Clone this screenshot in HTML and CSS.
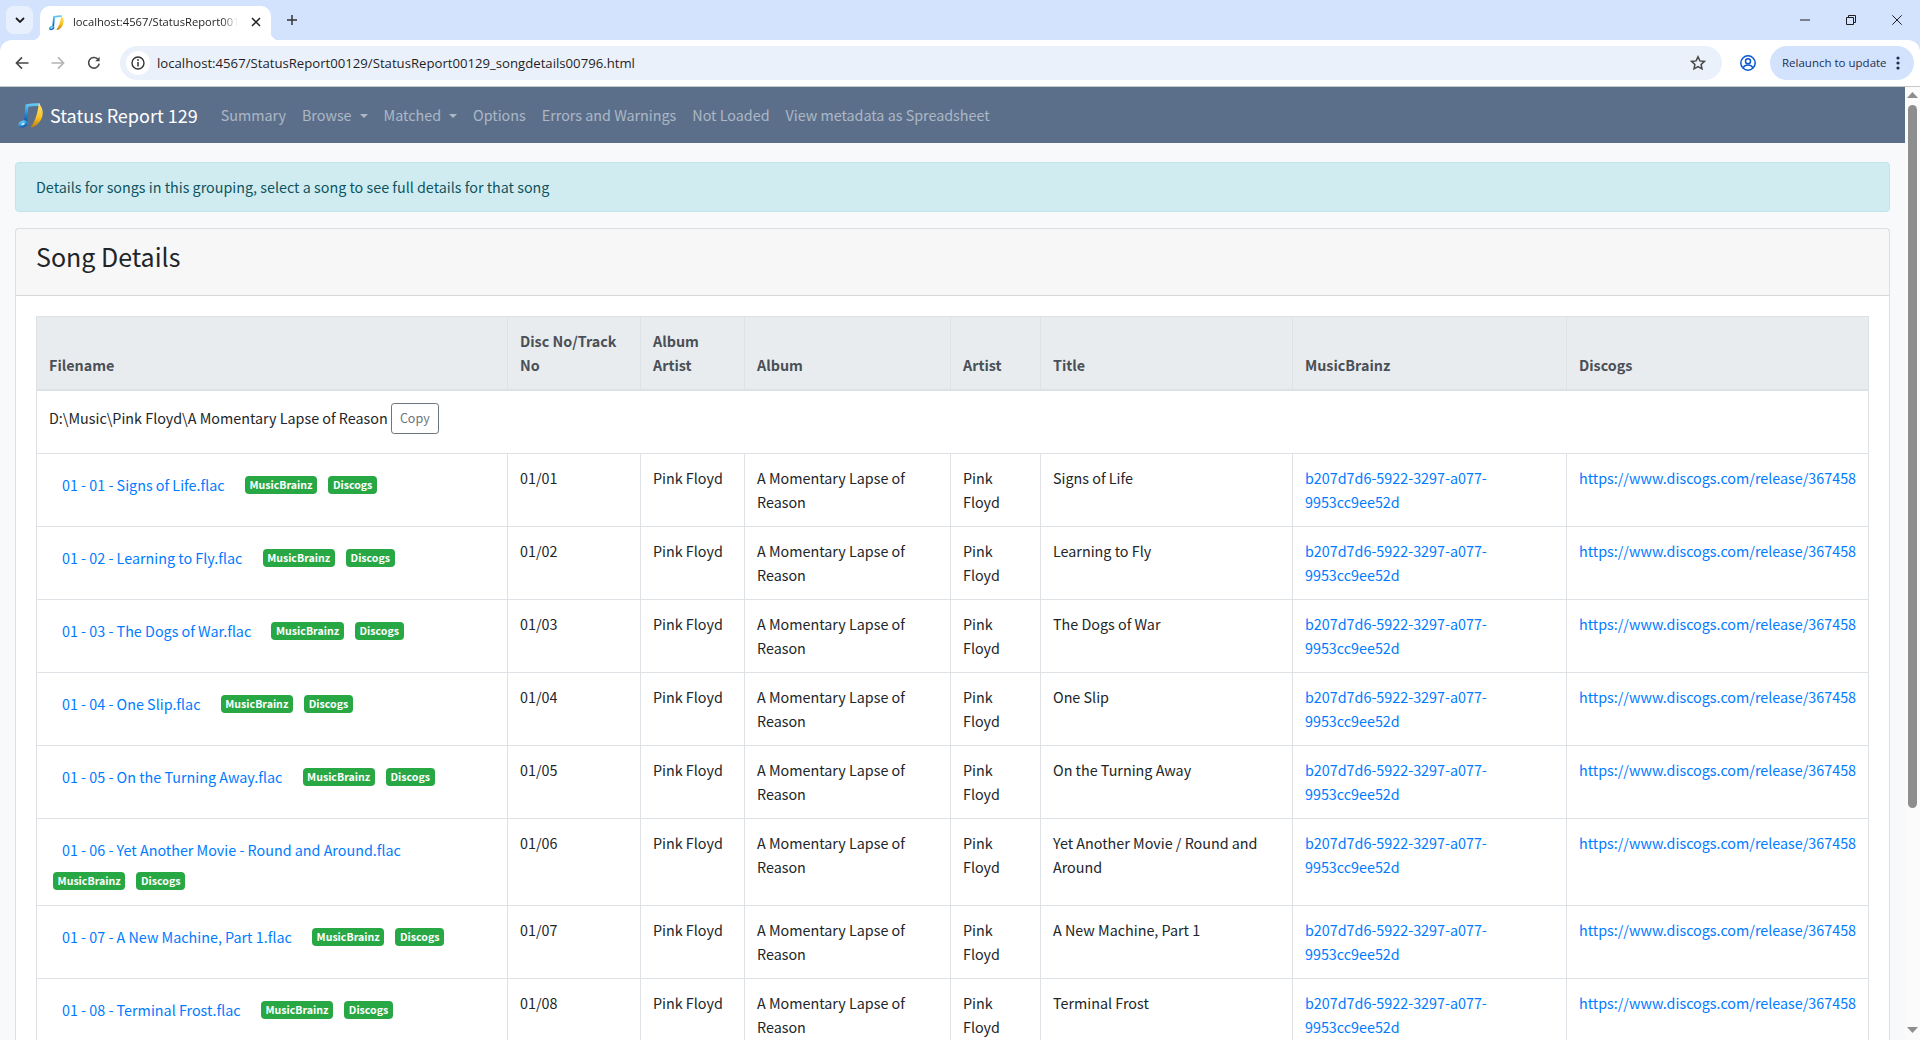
FILE: index.html
```html
<!DOCTYPE html>
<html lang="en">
<head>
<meta charset="utf-8">
<title>Status Report 129</title>
<link rel="stylesheet" href="styles.css">
</head>
<body>
<svg class="defs" width="0" height="0" aria-hidden="true">
  <defs>
    <linearGradient id="noteBlue" x1="0" y1="0" x2="0" y2="1">
      <stop offset="0" stop-color="#6fd0f5"/><stop offset="0.55" stop-color="#1f8fe0"/><stop offset="1" stop-color="#0f4f9c"/>
    </linearGradient>
    <linearGradient id="noteGold" x1="0" y1="0" x2="0" y2="1">
      <stop offset="0" stop-color="#ffe27a"/><stop offset="0.6" stop-color="#fbc21c"/><stop offset="1" stop-color="#b87a10"/>
    </linearGradient>
    <symbol id="note" viewBox="0 0 28 28">
      <path d="M8.500 3.500 C13.500 2.400 18.500 2 23 2.300 L23 5 C19 4.800 15 5.100 11.400 5.800 L10 21 L7 21 Z" fill="url(#noteBlue)"/>
      <ellipse cx="6" cy="23" rx="4.600" ry="3.400" transform="rotate(-25 6 23)" fill="url(#noteBlue)"/>
      <ellipse cx="6" cy="23" rx="1.900" ry="1.200" transform="rotate(-25 6 23)" fill="#bfe6fb"/>
      <path d="M21.800 2.200 C26.400 7 26.800 13.600 24 18.800 C22.200 22 19.400 25 15.400 26.400 C14.400 26.700 13.800 26 14.400 25.200 C17.400 21 20.600 13.600 21.800 2.200 Z" fill="url(#noteGold)"/>
    </symbol>
  </defs>
</svg>

<header class="browser">
  <div class="tabstrip">
    <button class="tab-search" aria-label="Search tabs">
      <svg width="10" height="6" viewBox="0 0 10 6"><path d="M1 1l4 4 4-4" fill="none" stroke="#1f1f1f" stroke-width="1.800"/></svg>
    </button>
    <div class="tab">
      <svg class="tab-icon" width="17" height="17"><use href="#note"/></svg>
      <span class="tab-title">localhost:4567/StatusReport00129</span>
      <svg class="tab-close" width="10" height="10" viewBox="0 0 10 10"><path d="M1 1l8 8M9 1l-8 8" stroke="#1f1f1f" stroke-width="1.500"/></svg>
    </div>
    <svg class="tab-new" width="12" height="12" viewBox="0 0 12 12"><path d="M6 1v10M1 6h10" stroke="#333" stroke-width="1.500"/></svg>
    <div class="window-controls">
      <svg width="10" height="10" viewBox="0 0 10 10"><path d="M0 5h10" stroke="#1f1f1f"/></svg>
      <svg width="10" height="10" viewBox="0 0 10 10"><path d="M.5 2.500h7v7h-7zM2.500 2.500v-2h7v7h-2" fill="none" stroke="#1f1f1f"/></svg>
      <svg width="10" height="10" viewBox="0 0 10 10"><path d="M.3.3l9.400 9.400M9.700.3L.3 9.700" stroke="#1f1f1f"/></svg>
    </div>
  </div>
  <div class="toolbar">
    <svg class="tool" width="14" height="14" viewBox="0 0 14 14"><path d="M13.500 7H1.800M7 1.400L1.400 7 7 12.600" fill="none" stroke="#474747" stroke-width="1.600"/></svg>
    <svg class="tool" width="14" height="14" viewBox="0 0 14 14"><path d="M.5 7h11.700M7 1.400L12.600 7 7 12.600" fill="none" stroke="#b4b4b4" stroke-width="1.600"/></svg>
    <svg class="tool" width="14" height="14" viewBox="0 0 14 14"><path d="M12.200 7.600A5.300 5.300 0 1 1 10.700 3" fill="none" stroke="#474747" stroke-width="1.600"/><path d="M12.600.8v4.400H8.200z" fill="#474747"/></svg>
    <div class="omnibox">
      <span class="site-info">
        <svg width="14" height="14" viewBox="0 0 14 14"><circle cx="7" cy="7" r="6" fill="none" stroke="#333" stroke-width="1.400"/><path d="M7 6v4.400" stroke="#333" stroke-width="1.500"/><circle cx="7" cy="4" r=".9" fill="#333"/></svg>
      </span>
      <span class="url">localhost:4567/StatusReport00129/StatusReport00129_songdetails00796.html</span>
      <svg class="star" width="16" height="16" viewBox="0 0 16 16"><path d="M8 1.800l1.900 4.100 4.500.5-3.300 3 .9 4.500L8 11.700l-4 2.200.9-4.500-3.300-3 4.500-.5z" fill="none" stroke="#474747" stroke-width="1.500"/></svg>
    </div>
    <svg class="profile" width="16" height="16" viewBox="0 0 16 16"><circle cx="8" cy="8" r="7.200" fill="none" stroke="#0b57d0" stroke-width="1.500"/><circle cx="8" cy="6.200" r="2.500" fill="none" stroke="#0b57d0" stroke-width="1.500"/><path d="M3.200 12.600c1-1.900 2.800-2.600 4.800-2.600s3.800.7 4.800 2.600" fill="none" stroke="#0b57d0" stroke-width="1.500"/></svg>
    <div class="relaunch">
      <span>Relaunch to update</span>
      <svg width="4" height="14" viewBox="0 0 4 14"><circle cx="2" cy="2" r="1.600" fill="#1f2f4f"/><circle cx="2" cy="7" r="1.600" fill="#1f2f4f"/><circle cx="2" cy="12" r="1.600" fill="#1f2f4f"/></svg>
    </div>
  </div>
</header>

<div class="viewport">
  <div class="page">
    <nav class="navbar">
      <a class="brand" href="#"><svg class="brand-icon" width="28" height="28"><use href="#note"/></svg>Status Report 129</a>
      <a class="nav-link" href="#">Summary</a>
      <a class="nav-link caret" href="#">Browse</a>
      <a class="nav-link caret" href="#">Matched</a>
      <a class="nav-link" href="#">Options</a>
      <a class="nav-link" href="#">Errors and Warnings</a>
      <a class="nav-link" href="#">Not Loaded</a>
      <a class="nav-link" href="#">View metadata as Spreadsheet</a>
    </nav>
    <main class="container">
      <div class="alert">Details for songs in this grouping, select a song to see full details for that song</div>
      <section class="card">
        <div class="card-header"><h3>Song Details</h3></div>
        <div class="card-body">
          <table class="songs">
            <colgroup>
              <col class="c-file"><col class="c-track"><col class="c-aartist"><col class="c-album"><col class="c-artist"><col class="c-title"><col class="c-mb"><col class="c-dg">
            </colgroup>
            <thead>
              <tr><th>Filename</th><th>Disc No/Track No</th><th>Album Artist</th><th>Album</th><th>Artist</th><th>Title</th><th>MusicBrainz</th><th>Discogs</th></tr>
            </thead>
            <tbody>
              <tr><td colspan="8" class="folder">D:\Music\Pink Floyd\A Momentary Lapse of Reason <button class="copy">Copy</button></td></tr>
              <tr>
                <td><a class="btn-link" href="#">01 - 01 - Signs of Life.flac</a> <a class="badge" href="#">MusicBrainz</a> <a class="badge" href="#">Discogs</a></td>
                <td>01/01</td><td>Pink Floyd</td><td>A Momentary Lapse of Reason</td><td>Pink Floyd</td><td>Signs of Life</td>
                <td><a href="#">b207d7d6-5922-3297-a077-9953cc9ee52d</a></td><td><a href="#">https://www.discogs.com/release/367458</a></td>
              </tr>
              <tr>
                <td><a class="btn-link" href="#">01 - 02 - Learning to Fly.flac</a> <a class="badge" href="#">MusicBrainz</a> <a class="badge" href="#">Discogs</a></td>
                <td>01/02</td><td>Pink Floyd</td><td>A Momentary Lapse of Reason</td><td>Pink Floyd</td><td>Learning to Fly</td>
                <td><a href="#">b207d7d6-5922-3297-a077-9953cc9ee52d</a></td><td><a href="#">https://www.discogs.com/release/367458</a></td>
              </tr>
              <tr>
                <td><a class="btn-link" href="#">01 - 03 - The Dogs of War.flac</a> <a class="badge" href="#">MusicBrainz</a> <a class="badge" href="#">Discogs</a></td>
                <td>01/03</td><td>Pink Floyd</td><td>A Momentary Lapse of Reason</td><td>Pink Floyd</td><td>The Dogs of War</td>
                <td><a href="#">b207d7d6-5922-3297-a077-9953cc9ee52d</a></td><td><a href="#">https://www.discogs.com/release/367458</a></td>
              </tr>
              <tr>
                <td><a class="btn-link" href="#">01 - 04 - One Slip.flac</a> <a class="badge" href="#">MusicBrainz</a> <a class="badge" href="#">Discogs</a></td>
                <td>01/04</td><td>Pink Floyd</td><td>A Momentary Lapse of Reason</td><td>Pink Floyd</td><td>One Slip</td>
                <td><a href="#">b207d7d6-5922-3297-a077-9953cc9ee52d</a></td><td><a href="#">https://www.discogs.com/release/367458</a></td>
              </tr>
              <tr>
                <td><a class="btn-link" href="#">01 - 05 - On the Turning Away.flac</a> <a class="badge" href="#">MusicBrainz</a> <a class="badge" href="#">Discogs</a></td>
                <td>01/05</td><td>Pink Floyd</td><td>A Momentary Lapse of Reason</td><td>Pink Floyd</td><td>On the Turning Away</td>
                <td><a href="#">b207d7d6-5922-3297-a077-9953cc9ee52d</a></td><td><a href="#">https://www.discogs.com/release/367458</a></td>
              </tr>
              <tr>
                <td><a class="btn-link" href="#">01 - 06 - Yet Another Movie - Round and Around.flac</a> <a class="badge" href="#">MusicBrainz</a> <a class="badge" href="#">Discogs</a></td>
                <td>01/06</td><td>Pink Floyd</td><td>A Momentary Lapse of Reason</td><td>Pink Floyd</td><td>Yet Another Movie / Round and Around</td>
                <td><a href="#">b207d7d6-5922-3297-a077-9953cc9ee52d</a></td><td><a href="#">https://www.discogs.com/release/367458</a></td>
              </tr>
              <tr>
                <td><a class="btn-link" href="#">01 - 07 - A New Machine, Part 1.flac</a> <a class="badge" href="#">MusicBrainz</a> <a class="badge" href="#">Discogs</a></td>
                <td>01/07</td><td>Pink Floyd</td><td>A Momentary Lapse of Reason</td><td>Pink Floyd</td><td>A New Machine, Part 1</td>
                <td><a href="#">b207d7d6-5922-3297-a077-9953cc9ee52d</a></td><td><a href="#">https://www.discogs.com/release/367458</a></td>
              </tr>
              <tr>
                <td><a class="btn-link" href="#">01 - 08 - Terminal Frost.flac</a> <a class="badge" href="#">MusicBrainz</a> <a class="badge" href="#">Discogs</a></td>
                <td>01/08</td><td>Pink Floyd</td><td>A Momentary Lapse of Reason</td><td>Pink Floyd</td><td>Terminal Frost</td>
                <td><a href="#">b207d7d6-5922-3297-a077-9953cc9ee52d</a></td><td><a href="#">https://www.discogs.com/release/367458</a></td>
              </tr>
            </tbody>
          </table>
        </div>
      </section>
    </main>
  </div>
  <div class="scrollbar">
    <svg width="11" height="6" viewBox="0 0 11 6"><path d="M5.500 0l5.500 6H0z" fill="#8e8e8e"/></svg>
    <div class="thumb"></div>
    <svg width="11" height="6" viewBox="0 0 11 6"><path d="M0 0h11L5.500 6z" fill="#8e8e8e"/></svg>
  </div>
</div>
</body>
</html>
```
FILE: styles.css
```css
* { box-sizing: border-box; }
html, body { margin: 0; height: 100%; overflow: hidden; }
body {
  display: flex;
  flex-direction: column;
  height: 1040px;
  font-family: "Noto Sans CJK SC", "Noto Sans", sans-serif;
  font-size: 14.330px;
  line-height: 24px;
  color: #212529;
  background: #d3e3fd;
}
.defs { position: absolute; }
a { color: #007bff; text-decoration: none; }

/* browser chrome */
.browser { flex: none; font-family: "Open Sans", "Noto Sans", sans-serif; }
.tabstrip { display: flex; align-items: flex-start; height: 40px; padding-left: 6px; }
.tab-search {
  width: 27px; height: 28px; margin-top: 6px; padding: 0; border: 0; border-radius: 8px;
  background: #e8f0fd; display: flex; align-items: center; justify-content: center;
}
.tab {
  position: relative;
  display: flex; align-items: center;
  width: 231px; height: 34px; margin: 6px 0 0 7px; padding: 0 10px 2px 8px;
  background: #fff; border-radius: 10px 10px 0 0;
}
.tab::before, .tab::after {
  content: ""; position: absolute; bottom: 0; width: 8px; height: 8px;
}
.tab::before { left: -8px; background: radial-gradient(circle at 0 0, transparent 8px, #fff 8.500px); }
.tab::after { right: -8px; background: radial-gradient(circle at 100% 0, transparent 8px, #fff 8.500px); }
.tab-icon { flex: none; margin-right: 8px; }
.tab-title {
  flex: 1; min-width: 0; overflow: hidden; white-space: nowrap; font-size: 11.200px; line-height: 16px; color: #1f1f1f;
  -webkit-mask-image: linear-gradient(90deg, #000 90%, transparent);
  mask-image: linear-gradient(90deg, #000 90%, transparent);
}
.tab-close { flex: none; margin-left: 13px; }
.tab-new { margin: 14px 0 0 15px; }
.window-controls { margin-left: auto; display: flex; gap: 36px; padding: 15px 18px 0 0; }
.window-controls svg { display: block; }

.toolbar {
  display: flex; align-items: center;
  height: 47px; padding: 0 6px 1px 15px;
  background: #fff; border-radius: 12px 12px 0 0; border-bottom: 1px solid #c9c9c9;
}
.tool { flex: none; margin-right: 22px; }
.tool:nth-child(3) { margin-right: 19px; }
.omnibox {
  flex: 1; display: flex; align-items: center; height: 34px; padding: 0 16px 0 6px;
  background: #ebf1fb; border-radius: 17px;
}
.site-info {
  flex: none; width: 24px; height: 24px; margin-right: 7px; border-radius: 50%; background: #fff;
  display: flex; align-items: center; justify-content: center;
}
.url { flex: 1; font-size: 13.160px; line-height: 20px; color: #1f1f1f; white-space: nowrap; }
.star { flex: none; }
.profile { flex: none; margin: 0 14px 0 18px; }
.relaunch {
  flex: none; display: flex; align-items: center; width: 144px; height: 34px; padding: 0 14px 0 12px;
  background: #d3e3fd; border-radius: 17px;
  font-size: 11.500px; line-height: 16px; color: #1f2f4f; white-space: nowrap;
}
.relaunch span { flex: 1; }

/* page frame */
.viewport { flex: 1; min-height: 0; display: flex; background: #f8f9fa; }
.page { flex: 1; min-width: 0; overflow: hidden; }
.scrollbar {
  flex: none; width: 15px; background: #fbfbfb;
  display: flex; flex-direction: column; align-items: center; padding: 5px 0;
}
.thumb { width: 9px; height: 703px; margin-top: 7px; background: #8e8e8e; border-radius: 5px; }
.scrollbar svg:last-child { margin-top: auto; margin-bottom: 2px; }

/* navbar */
.navbar { display: flex; align-items: center; height: 56px; padding: 8px 16px; background: #5b6f8b; }
.brand { display: flex; align-items: center; margin-right: 15px; color: #fff; font-size: 18px; line-height: 30px; white-space: nowrap; }
.brand-icon { margin: 0 5px 0 1px; flex: none; }
.nav-link { padding: 8px; color: rgba(255,255,255,.5); white-space: nowrap; }
.caret::after {
  content: ""; display: inline-block; margin-left: 8px; vertical-align: 3px;
  border-top: 4.800px solid; border-left: 4.800px solid transparent; border-right: 4.800px solid transparent;
}

/* content */
.container { padding: 19px 15px 0; }
.alert {
  height: 50px; margin-bottom: 16px; padding: 12px 20px;
  background: #d1ecf1; border: 1px solid #bee5eb; border-radius: 4px; color: #0c5460;
}
.card { background: #fff; border: 1px solid rgba(0,0,0,.125); border-radius: 4px; }
.card-header { padding: 11px 20px 13px; background: rgba(0,0,0,.03); border-bottom: 1px solid rgba(0,0,0,.125); }
.card-header h3 { margin: 0 0 8px; font-size: 25px; line-height: 33.600px; font-weight: 400; }
.card-body { padding: 20px; }

.songs { width: 1832px; table-layout: fixed; border-collapse: collapse; }
.c-file { width: 471px; }
.c-track { width: 133px; }
.c-aartist { width: 104px; }
.c-album { width: 206px; }
.c-artist { width: 90px; }
.c-title { width: 252px; }
.c-mb { width: 274px; }
.c-dg { width: 302px; }
.songs th, .songs td {
  padding: 12px; border: 1px solid #dee2e6; vertical-align: top; text-align: left;
}
.songs th {
  vertical-align: bottom; background: #e9ecef; color: #495057; font-weight: 700;
  border-bottom-width: 2px;
}
.songs td.folder { height: 64px; }
.btn-link { display: inline-block; padding: 7px 13px; line-height: 24px; }
.badge {
  display: inline-block; margin: 0 4px; padding: 3px 4.600px;
  font-size: 10.600px; line-height: 12px; font-weight: 700; color: #fff;
  background: #28a745; border-radius: 4px; vertical-align: 2px; white-space: nowrap;
}
.copy {
  height: 31px; padding: 3px 8px 5px; font: 12.500px/21px "Noto Sans CJK SC", sans-serif;
  color: #6c757d; background: transparent; border: 1px solid #6c757d; border-radius: 3.200px;
  vertical-align: 1px;
}
```
